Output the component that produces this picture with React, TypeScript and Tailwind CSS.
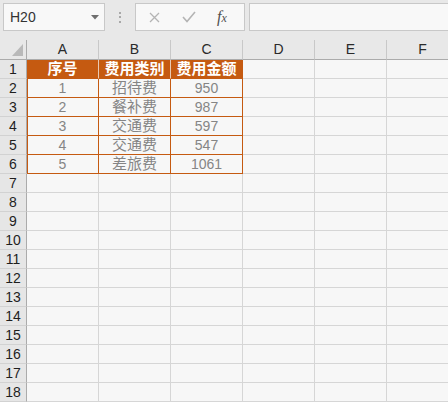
import React from "react";

const cols = ["A", "B", "C", "D", "E", "F"];
const data: (string | number)[][] = [
  [1, "招待费", 950],
  [2, "餐补费", 987],
  [3, "交通费", 597],
  [4, "交通费", 547],
  [5, "差旅费", 1061],
];
const header = ["序号", "费用类别", "费用金额"];

const font = "font-['Liberation_Sans','Noto_Sans_CJK_SC',sans-serif]";

function RowHead({ n }: { n: number }) {
  return (
    <div className="w-[27px] h-[19px] shrink-0 bg-[#e6e6e6] border-r border-r-[#ababab] border-b border-b-[#d2d2d2] flex items-end justify-center text-[14px] leading-[15px] text-[#1e1e1e] pb-[1px]">
      {n}
    </div>
  );
}

export default function App() {
  const emptyRows = Array.from({ length: 12 }, (_, i) => i + 7);
  return (
    <div className={`w-[448px] h-[402px] overflow-hidden bg-[#e8e8e8] ${font}`}>
      {/* formula bar */}
      <div className="h-[40px] flex items-start pt-[3px] pl-[3px]">
        <div className="w-[102px] h-[28px] shrink-0 bg-[#f8f8f8] border border-[#c8c8c8] flex items-center pl-[6px] pr-[5px]">
          <span className="text-[14px] text-[#333] leading-none">H20</span>
          <svg className="ml-auto" width="8" height="5" viewBox="0 0 8 5">
            <path d="M0 0 H8 L4 4.5 Z" fill="#6e6e6e" />
          </svg>
        </div>
        <div className="w-[30px] h-[28px] shrink-0 flex flex-col items-center justify-center gap-[2.5px]">
          <div className="w-[2px] h-[2px] bg-[#a8a8a8]" />
          <div className="w-[2px] h-[2px] bg-[#a8a8a8]" />
          <div className="w-[2px] h-[2px] bg-[#a8a8a8]" />
        </div>
        <div className="w-[110px] h-[28px] shrink-0 bg-[#f8f8f8] border border-[#c8c8c8] flex items-center">
          <div className="w-[12px] ml-[12px] flex justify-center">
            <svg width="11" height="11" viewBox="0 0 11 11">
              <path d="M1 1 L10 10 M10 1 L1 10" stroke="#b4b4b4" strokeWidth="1.3" />
            </svg>
          </div>
          <div className="ml-[22px] flex">
            <svg width="14" height="12" viewBox="0 0 14 12">
              <path d="M1 6 L5 10.5 L13 1" stroke="#b4b4b4" strokeWidth="1.6" fill="none" />
            </svg>
          </div>
          <span className="ml-[21px] font-['Liberation_Serif',serif] italic text-[16px] text-[#505050] leading-none">
            f<span className="text-[12px]">x</span>
          </span>
        </div>
        <div className="ml-[4px] flex-1 h-[28px] bg-[#f8f8f8] border border-[#c8c8c8] border-r-0" />
      </div>

      {/* column headers */}
      <div className="flex h-[20px]">
        <div className="w-[27px] h-[20px] shrink-0 border-r border-r-[#ababab] border-b border-b-[#ababab] flex items-end justify-end pr-[3px] pb-[3px]">
          <svg width="11" height="12" viewBox="0 0 11 12">
            <path d="M11 0 V12 H0 Z" fill="#b9b9b9" />
          </svg>
        </div>
        {cols.map((c) => (
          <div
            key={c}
            className="w-[72px] h-[20px] shrink-0 border-r border-r-[#c8c8c8] border-b border-b-[#ababab] flex items-end justify-center text-[14px] leading-[15px] pb-[2px] text-[#2a2a2a]"
          >
            {c}
          </div>
        ))}
      </div>

      {/* row 1: header */}
      <div className="flex">
        <RowHead n={1} />
        {header.map((h, i) => (
          <div
            key={h}
            className={`w-[72px] h-[19px] shrink-0 bg-[#c55a11] border-b border-b-[#c55a11] ${i < 2 ? "border-r border-r-[#e9c9b2]" : "border-r border-r-[#c55a11]"} flex items-end justify-center text-[15px] leading-[16px] pb-[1px] font-bold text-white`}
          >
            {h}
          </div>
        ))}
        {cols.slice(3).map((c) => (
          <div key={c} className="w-[72px] h-[19px] shrink-0 bg-[#f7f7f7] border-r border-r-[#d6d6d6] border-b border-b-[#d6d6d6]" />
        ))}
      </div>

      {/* data rows */}
      {data.map((r, ri) => (
        <div key={ri} className="flex">
          <RowHead n={ri + 2} />
          {r.map((v, ci) => (
            <div
              key={ci}
              className={`w-[72px] h-[19px] shrink-0 bg-[#f7f7f7] border-r border-b border-[#c55a11] flex items-end justify-center pb-[1px] text-[#858585] ${ci === 0 ? "shadow-[inset_1px_0_0_#c55a11]" : ""} ${ci === 1 ? "text-[15px] leading-[16px]" : "text-[14px] leading-[15px]"}`}
            >
              {v}
            </div>
          ))}
          {cols.slice(3).map((c) => (
            <div key={c} className="w-[72px] h-[19px] shrink-0 bg-[#f7f7f7] border-r border-r-[#d6d6d6] border-b border-b-[#d6d6d6]" />
          ))}
        </div>
      ))}

      {/* empty rows */}
      {emptyRows.map((n) => (
        <div key={n} className="flex">
          <RowHead n={n} />
          {cols.map((c) => (
            <div key={c} className="w-[72px] h-[19px] shrink-0 bg-[#f7f7f7] border-r border-r-[#d6d6d6] border-b border-b-[#d6d6d6]" />
          ))}
        </div>
      ))}
    </div>
  );
}
